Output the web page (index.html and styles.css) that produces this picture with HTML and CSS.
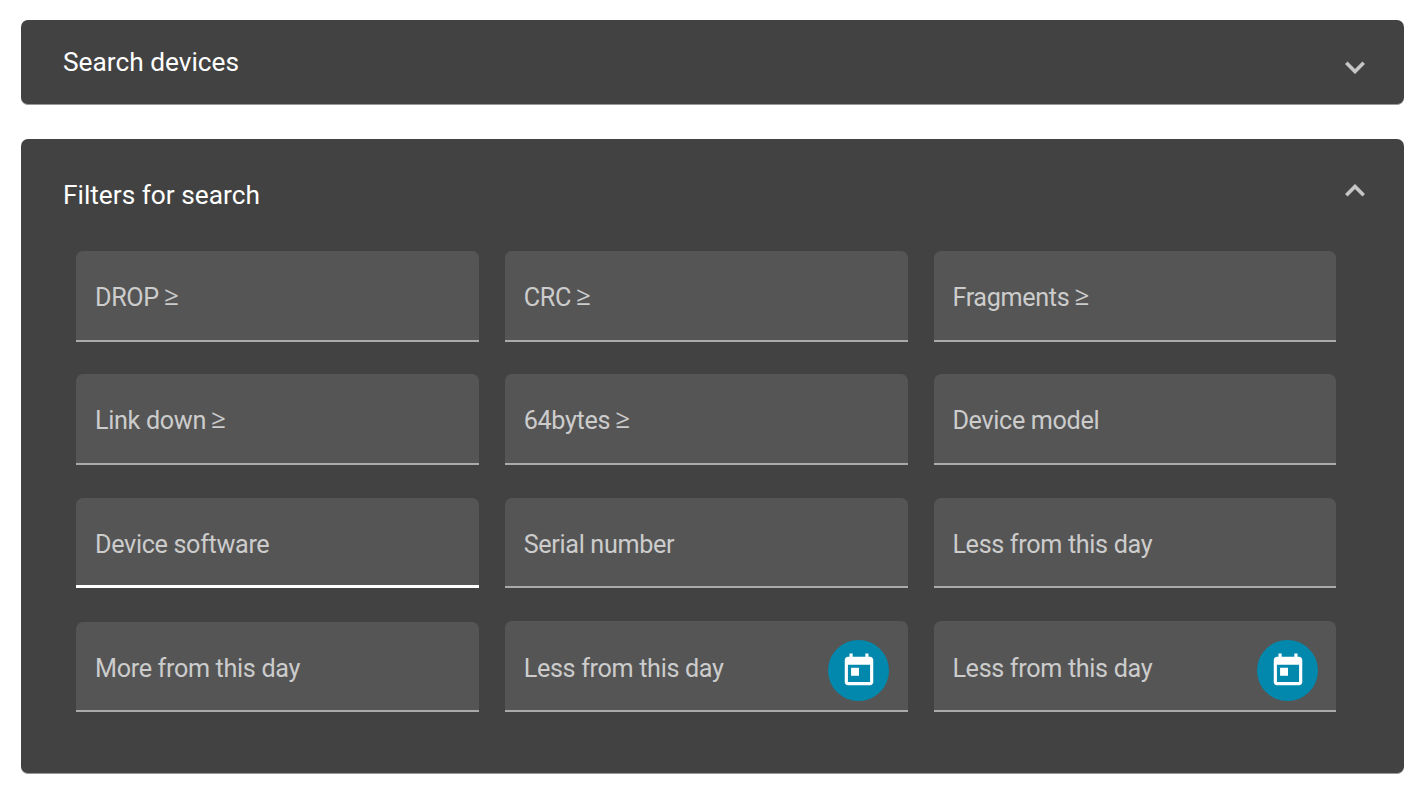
FILE: index.html
```html
<!DOCTYPE html>
<html lang="en">
<head>
<meta charset="utf-8">
<title>Device search</title>
<link rel="stylesheet" href="styles.css">
</head>
<body>
<main class="page">
  <section class="panel panel-search">
    <header class="panel-header">
      <h2 class="panel-title">Search devices</h2>
      <svg class="chevron" viewBox="0 0 20 13"><path d="M1.3 1.8 10 10.5 18.7 1.8"/></svg>
    </header>
  </section>
  <section class="panel panel-filters">
    <header class="panel-header">
      <h2 class="panel-title">Filters for search</h2>
      <svg class="chevron" viewBox="0 0 20 13"><path d="M1.3 11.2 10 2.5 18.7 11.2"/></svg>
    </header>
    <div class="filters">
      <div class="field"><label class="label">DROP <span class="sign">≥</span></label></div>
      <div class="field"><label class="label">CRC <span class="sign">≥</span></label></div>
      <div class="field"><label class="label">Fragments <span class="sign">≥</span></label></div>
      <div class="field"><label class="label">Link down <span class="sign">≥</span></label></div>
      <div class="field"><label class="label">64bytes <span class="sign">≥</span></label></div>
      <div class="field"><label class="label">Device model</label></div>
      <div class="field field-short field-focused"><label class="label">Device software</label></div>
      <div class="field field-short"><label class="label">Serial number</label></div>
      <div class="field field-short"><label class="label">Less from this day</label></div>
      <div class="field field-low"><label class="label">More from this day</label></div>
      <div class="field field-date">
        <label class="label">Less from this day</label>
        <button class="date-button" aria-label="Pick a date"><svg class="date-icon" viewBox="0 0 24 24"><path d="M19 3h-1V1h-2v2H8V1H6v2H5c-1.11 0-1.99.9-1.99 2L3 19c0 1.1.89 2 2 2h14c1.1 0 2-.9 2-2V5c0-1.1-.9-2-2-2zm0 16H5V8h14v11zM7 10h5v5H7z"/></svg></button>
      </div>
      <div class="field field-date">
        <label class="label">Less from this day</label>
        <button class="date-button" aria-label="Pick a date"><svg class="date-icon" viewBox="0 0 24 24"><path d="M19 3h-1V1h-2v2H8V1H6v2H5c-1.11 0-1.99.9-1.99 2L3 19c0 1.1.89 2 2 2h14c1.1 0 2-.9 2-2V5c0-1.1-.9-2-2-2zm0 16H5V8h14v11zM7 10h5v5H7z"/></svg></button>
      </div>
    </div>
  </section>
</main>
</body>
</html>
```
FILE: styles.css
```css
* { box-sizing: border-box; }

body {
  margin: 0;
  background: #fff;
  font-family: Roboto, sans-serif;
}

.page {
  display: flex;
  flex-direction: column;
  gap: 34px;
  padding: 20px 22px 16px 21px;
}

.panel {
  background: #424242;
  border-radius: 7px;
  border-bottom: 1px solid #999;
}

.panel-search { height: 85px; padding: 26px 39px 0 42px; }
.panel-filters { height: 635px; padding: 40px 39px 0 42px; }

.panel-header {
  display: flex;
  justify-content: space-between;
  height: 32px;
}

.panel-title {
  margin: 0;
  font-size: 26.25px;
  font-weight: 400;
  line-height: 32px;
  color: #fff;
}

.chevron {
  width: 20px;
  height: 13px;
  fill: none;
  stroke: #c6c6c6;
  stroke-width: 3.6;
}

.panel-search .chevron { margin-top: 15px; }
.panel-filters .chevron { margin-top: 5px; }

.filters {
  display: grid;
  grid-template-columns: 403px 403px 402px;
  grid-template-rows: 91px 92px 91px 91px;
  gap: 32px 26px;
  padding: 40px 0 0 13px;
}

.field {
  display: flex;
  align-items: center;
  justify-content: space-between;
  height: 91px;
  padding: 5px 18px 0 19px;
  background: #555;
  border-bottom: 2px solid #aaa;
  border-radius: 7px 7px 0 0;
}

.field:nth-child(3n) { padding-left: 18.4px; }
.field:nth-child(3n + 2) { padding-left: 18.7px; padding-right: 19px; }

.field-short { height: 90px; padding-top: 6px; }
.field-focused { border-bottom: 3px solid #fff; padding-top: 7px; }
.field-low { height: 90px; margin-top: 1px; padding-top: 5px; }
.field-date { padding-top: 6px; }

.label {
  font-size: 25.2px;
  line-height: 30px;
  letter-spacing: -0.34px;
  color: #ccc;
  white-space: nowrap;
}

.sign {
  font-family: "Open Sans", "Noto Sans", sans-serif;
  font-size: 26px;
  line-height: 0;
  margin-left: -0.7px;
  vertical-align: 1px;
}

.date-button {
  display: flex;
  align-items: center;
  justify-content: center;
  width: 61px;
  height: 61px;
  margin-top: 4px;
  padding: 0;
  border: 0;
  border-radius: 50%;
  background: #0288ad;
}

.date-icon { width: 38px; height: 38px; margin-top: 1px; fill: #fff; flex: none; }
```
